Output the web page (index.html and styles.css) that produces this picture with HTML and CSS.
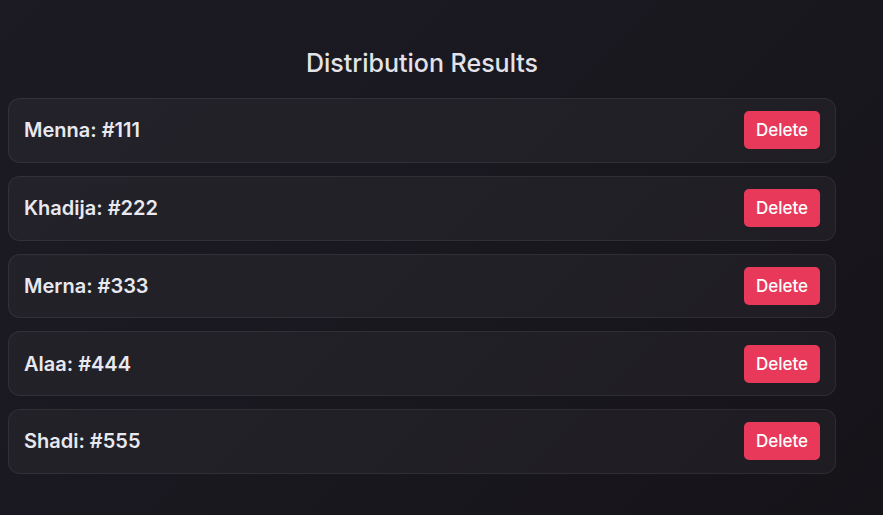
FILE: index.html
```html
<!DOCTYPE html>
<html>
<head>
<meta charset="utf-8">
<title>Distribution Results</title>
<link rel="stylesheet" href="styles.css">
</head>
<body>
<div class="results">
	<h2 class="tit">Distribution Results</h2>
	<div class="item">
		<span class="name">Menna: #111</span>
		<button class="del">Delete</button>
	</div>
	<div class="item">
		<span class="name">Khadija: #222</span>
		<button class="del">Delete</button>
	</div>
	<div class="item">
		<span class="name">Merna: #333</span>
		<button class="del">Delete</button>
	</div>
	<div class="item">
		<span class="name">Alaa: #444</span>
		<button class="del">Delete</button>
	</div>
	<div class="item">
		<span class="name">Shadi: #555</span>
		<button class="del">Delete</button>
	</div>
</div>
</body>
</html>
```

FILE: styles.css
```css
html {
	min-height: 100%;
	background: linear-gradient(135deg, #1c1b24 0%, #19181f 50%, #161419 100%);
}
body {
	margin: 8px;
	font-family: Inter, "Noto Sans", sans-serif;
	color: #e6e6ee;
}
.results {
	width: 828px;
}
.tit {
	margin: 41px 0 20px;
	text-align: center;
	font-size: 25px;
	font-weight: 500;
	line-height: 29px;
	color: #e2e2e8;
}
.item {
	display: flex;
	justify-content: space-between;
	align-items: center;
	padding: 12.375px 15px;
	margin-bottom: 13px;
	background: rgba(255, 255, 255, 0.035);
	border: 1px solid rgba(255, 255, 255, 0.07);
	border-radius: 12px;
}
.name {
	font-size: 20px;
	font-weight: 600;
	color: #e8e8f0;
}
.del {
	height: 38px;
	width: 76px;
	padding: 0;
	font-family: Inter, "Noto Sans", sans-serif;
	font-size: 17px;
	font-weight: 500;
	color: #fff;
	background: #e8395a;
	border: none;
	border-radius: 5px;
}
```
